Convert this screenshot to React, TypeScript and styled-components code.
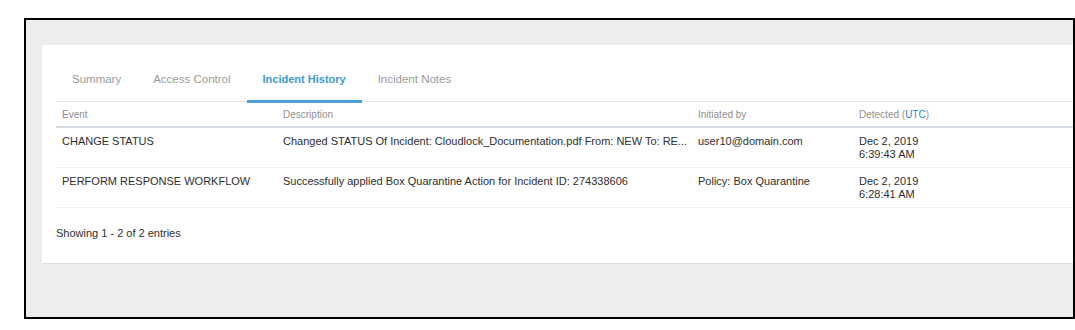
import styled, { createGlobalStyle } from "styled-components";

const GlobalStyle = createGlobalStyle`
  body {
    margin: 0;
    background: #ffffff;
    font-family: "Liberation Sans", Arial, sans-serif;
    color: #333333;
  }
`;

const Frame = styled.div`
  box-sizing: border-box;
  margin: 18px 0 0 24px;
  width: 1051px;
  height: 301px;
  border: 2px solid #000000;
  background: #ededed;
  overflow: hidden;
  padding: 25px 0 0 16px;
`;

const Card = styled.div`
  background: #ffffff;
  padding: 27px 0 23px 14px;
  box-shadow: 0 1px 0 #e0e0e0;
`;

const TabBar = styled.div`
  display: flex;
  border-bottom: 1px solid #e2e2e2;
`;

const Tab = styled.div<{ $active?: boolean }>`
  padding: 0 16px 14px;
  margin-bottom: -2px;
  font-size: ${(p) => (p.$active ? "11px" : "11.5px")};
  line-height: 14px;
  font-weight: ${(p) => (p.$active ? 700 : 400)};
  color: ${(p) => (p.$active ? "#3b9ad9" : "#9a9a9a")};
  border-bottom: 3px solid ${(p) => (p.$active ? "#4aa0d8" : "transparent")};
`;

const Table = styled.table`
  width: 100%;
  border-collapse: collapse;
  table-layout: fixed;
`;

const HeadCell = styled.th<{ $width?: number }>`
  width: ${(p) => (p.$width ? `${p.$width}px` : "auto")};
  text-align: left;
  font-weight: 400;
  font-size: 10px;
  line-height: 12px;
  color: #8f8f8f;
  padding: 7px 6px 5px;
  border-bottom: 2px solid #d5dbe3;
`;

const Utc = styled.span`
  color: #1a86e0;
`;

const Row = styled.tr`
  border-bottom: 1px solid #eceff3;
`;

const Cell = styled.td<{ $masked?: boolean }>`
  position: relative;
  vertical-align: top;
  font-size: 11px;
  line-height: 13px;
  color: #2e2e2e;
  padding: 7px 6px 6px;
  white-space: nowrap;
  overflow: hidden;

  ${(p) =>
    p.$masked &&
    `
    &::after {
      content: "";
      position: absolute;
      left: 0;
      bottom: -1px;
      width: 120px;
      height: 2px;
      background: #ffffff;
    }
  `}
`;

const Footer = styled.div`
  padding-top: 18px;
  font-size: 11px;
  line-height: 14px;
  color: #2e2e2e;
`;

const rows = [
  {
    event: "CHANGE STATUS",
    description:
      "Changed STATUS Of Incident: Cloudlock_Documentation.pdf From: NEW To: RE...",
    initiator: "user10@domain.com",
    date: "Dec 2, 2019",
    time: "6:39:43 AM",
  },
  {
    event: "PERFORM RESPONSE WORKFLOW",
    description:
      "Successfully applied Box Quarantine Action for Incident ID: 274338606",
    initiator: "Policy: Box Quarantine",
    date: "Dec 2, 2019",
    time: "6:28:41 AM",
  },
];

const tabs = ["Summary", "Access Control", "Incident History", "Incident Notes"];

function App() {
  return (
    <>
      <GlobalStyle />
      <Frame>
        <Card>
          <TabBar>
            {tabs.map((t) => (
              <Tab key={t} $active={t === "Incident History"}>
                {t}
              </Tab>
            ))}
          </TabBar>
          <Table>
            <thead>
              <tr>
                <HeadCell $width={209}>Event</HeadCell>
                <HeadCell $width={403}>Description</HeadCell>
                <HeadCell $width={149}>Initiated by</HeadCell>
                <HeadCell>
                  Detected (<Utc>UTC</Utc>)
                </HeadCell>
              </tr>
            </thead>
            <tbody>
              {rows.map((r, i) => (
                <Row key={r.event}>
                  <Cell>{r.event}</Cell>
                  <Cell>{r.description}</Cell>
                  <Cell>{r.initiator}</Cell>
                  <Cell $masked={i === rows.length - 1}>
                    {r.date}
                    <br />
                    {r.time}
                  </Cell>
                </Row>
              ))}
            </tbody>
          </Table>
          <Footer>Showing 1 - 2 of 2 entries</Footer>
        </Card>
      </Frame>
    </>
  );
}

export default App;
